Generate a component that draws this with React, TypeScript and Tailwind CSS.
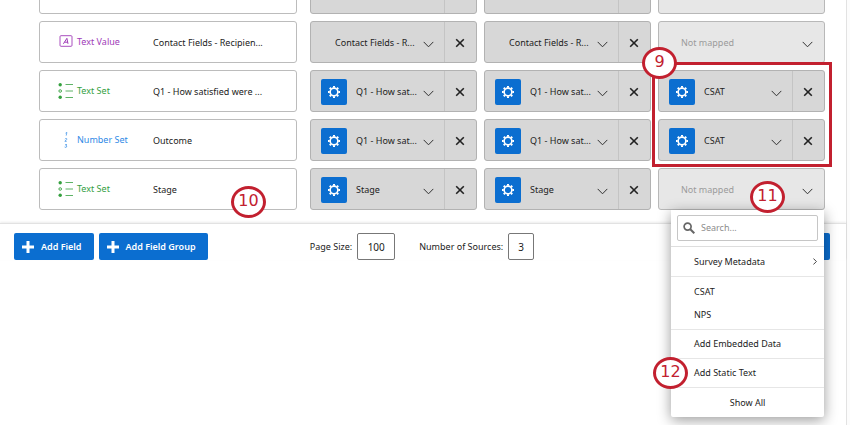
import React from 'react';

type FieldType = 'textValue' | 'textSet' | 'numberSet';

interface Mapping {
    label: string;
    gear?: boolean;
}

interface FieldRow {
    id: string;
    type?: FieldType;
    name: string;
    sources: (Mapping | null)[];
}

const rows: FieldRow[] = [
    { id: 'previous', name: '', sources: [{ label: '' }, { label: '' }, null] },
    {
        id: 'recipient',
        type: 'textValue',
        name: 'Contact Fields - Recipien...',
        sources: [{ label: 'Contact Fields - R...' }, { label: 'Contact Fields - R...' }, null],
    },
    {
        id: 'satisfied',
        type: 'textSet',
        name: 'Q1 - How satisfied were ...',
        sources: [
            { label: 'Q1 - How sat...', gear: true },
            { label: 'Q1 - How sat...', gear: true },
            { label: 'CSAT', gear: true },
        ],
    },
    {
        id: 'outcome',
        type: 'numberSet',
        name: 'Outcome',
        sources: [
            { label: 'Q1 - How sat...', gear: true },
            { label: 'Q1 - How sat...', gear: true },
            { label: 'CSAT', gear: true },
        ],
    },
    {
        id: 'stage',
        type: 'textSet',
        name: 'Stage',
        sources: [{ label: 'Stage', gear: true }, { label: 'Stage', gear: true }, null],
    },
];

const typeStyles: Record<FieldType, { label: string; color: string }> = {
    textValue: { label: 'Text Value', color: 'text-[#a03cb8]' },
    textSet: { label: 'Text Set', color: 'text-[#35a03f]' },
    numberSet: { label: 'Number Set', color: 'text-[#2f8ae6]' },
};

const TypeIcon = ({ type }: { type: FieldType }) => {
    if (type === 'textValue') {
        return (
            <svg viewBox="0 0 16 16" className="h-4 w-4" fill="none" stroke="currentColor" aria-hidden="true">
                <rect x="2" y="1.7" width="12" height="10.6" rx="1" strokeWidth="0.9" />
                <path d="M5.4 9.8 8.9 4.300l1.100 5.500M6.500 8.200h3.200" strokeWidth="1" />
            </svg>
        );
    }
    if (type === 'textSet') {
        return (
            <svg viewBox="0 0 16 16" className="h-4 w-4" fill="none" stroke="currentColor" aria-hidden="true">
                <circle cx="2.2" cy="1.7" r="1.7" fill="currentColor" stroke="none" />
                <circle cx="2.2" cy="8" r="1.3" strokeWidth="0.9" />
                <circle cx="2.2" cy="14.2" r="1.7" fill="currentColor" stroke="none" />
                <path d="M7.5 1.5H15M7.5 8H15M7.5 14.5H15" strokeWidth="0.8" />
            </svg>
        );
    }
    return (
        <svg viewBox="0 0 16 16" className="h-4 w-4" fill="none" stroke="currentColor" strokeWidth="0.7" aria-hidden="true">
            <path d="M7.5 1.2 8.9.4 8.2 3.6" />
            <path d="M7 7.2c.4-1.1 2.2-1 1.8.1C8.6 8 7.5 8.6 6.8 9.3h1.9" />
            <path d="M7 12.7h2l-1.2 1.1c1.3.1 1 1.7-.2 1.7-.5 0-.8-.2-1-.5" />
        </svg>
    );
};

const ChevronDown = ({ className }: { className?: string }) => (
    <svg viewBox="0 0 11 7" className={`h-[7px] w-[11px] ${className ?? ''}`} fill="none" stroke="#333" strokeWidth="1" aria-hidden="true">
        <path d="M.7.9 5.5 5.8 10.3.9" />
    </svg>
);

const GearIcon = () => (
    <svg viewBox="0 0 24 24" className="h-3 w-3" fill="none" stroke="#fff" aria-hidden="true">
        <circle cx="12" cy="12" r="7.7" strokeWidth="3.2" />
        <path
            d="M12 3.500V0M12 20.500V24M3.500 12H0M20.500 12H24M6 6 3.500 3.500M18 18l2.500 2.500M18 6l2.500-2.500M6 18l-2.500 2.500"
            strokeWidth="4"
        />
    </svg>
);

const PlusIcon = () => (
    <svg viewBox="0 0 12 12" className="h-3 w-3" stroke="#fff" strokeWidth="3" aria-hidden="true">
        <path d="M6 0v12M0 6h12" />
    </svg>
);

const Callout = ({ value, className }: { value: number; className: string }) => (
    <span
        className={`absolute z-30 flex h-8 w-[35px] items-center justify-center rounded-[50%] border-[3px] border-[#c2202f] bg-white pb-0.5 font-['DejaVu_Sans',sans-serif] text-[16px] leading-none text-[#c2202f] ${className}`}
    >
        {value}
    </span>
);

const FieldCard = ({ row }: { row: FieldRow }) => (
    <div className="relative mr-1.5 flex h-[42px] items-center rounded-[3px] border border-[#bcbcbc] bg-white">
        {row.type && (
            <div className={`flex w-[113px] items-center gap-[3px] pl-[18px] ${typeStyles[row.type].color}`}>
                <TypeIcon type={row.type} />
                <span>{typeStyles[row.type].label}</span>
            </div>
        )}
        <span className="min-w-0 flex-1 truncate pt-0.5">{row.name}</span>
        {row.id === 'stage' && <Callout value={10} className="top-[17px] right-[30px]" />}
    </div>
);

const MappedCell = ({ mapping, label }: { mapping: Mapping; label: string }) => (
    <div className="flex h-[42px] rounded-[3px] border border-[#b2b2b2] bg-[#d7d7d7]">
        <div className={`flex min-w-0 flex-1 items-center pt-0.5 ${mapping.gear ? 'pl-2.5' : 'pl-6'}`}>
            {mapping.gear && (
                <button
                    type="button"
                    aria-label="Mapping settings"
                    className="mr-[9px] flex h-[26px] w-[26px] shrink-0 items-center justify-center rounded-xs bg-[#0b6ed0]"
                >
                    <GearIcon />
                </button>
            )}
            <div className="relative flex h-full min-w-0 flex-1 items-center">
                <select aria-label={label} className="h-full w-full appearance-none bg-transparent pr-3">
                    <option>{mapping.label}</option>
                </select>
                <ChevronDown className="pointer-events-none absolute top-[17px] right-[10px]" />
            </div>
        </div>
        <button
            type="button"
            aria-label="Remove mapping"
            className="flex w-8 shrink-0 items-center justify-center border-l border-[#c4c4c4] pt-0.5 pr-0.5"
        >
            <svg viewBox="0 0 10 10" className="h-2.5 w-2.5" stroke="#222" strokeWidth="1.6" aria-hidden="true">
                <path d="m1.2 1.2 7.6 7.6M8.8 1.2 1.2 8.8" />
            </svg>
        </button>
    </div>
);

const itemClass = 'flex w-full items-center px-[23px] text-left';

const SourceMenu = () => (
    <div className="absolute top-full right-px left-[13px] z-20 rounded-b-xs bg-white shadow-[0_3px_14px_rgba(0,0,0,0.4)]">
        <div className="h-[37px] border-b border-[#dedede] px-1.5 pt-[5px]">
            <div className="flex h-[26px] items-center gap-1.5 rounded-xs border border-[#c6c6c6] pl-[5px]">
                <svg viewBox="0 0 12 12" className="h-3 w-3 shrink-0" fill="none" stroke="#666" aria-hidden="true">
                    <circle cx="4.6" cy="4.6" r="3.5" strokeWidth="1.7" />
                    <path d="m7.3 7.3 4 4" strokeWidth="2" />
                </svg>
                <input
                    type="search"
                    aria-label="Search sources"
                    placeholder="Search..."
                    className="w-full min-w-0 bg-transparent outline-none placeholder:text-[#8c8c8c]"
                />
            </div>
        </div>
        <button type="button" className={`${itemClass} h-[30px] justify-between border-b border-[#e6e6e6] pr-[7px]!`}>
            Survey Metadata
            <svg viewBox="0 0 4 7" className="h-[7px] w-1" fill="none" stroke="#444" strokeWidth="1" aria-hidden="true">
                <path d="m.4.5 3 3-3 3" />
            </svg>
        </button>
        <div className="border-b border-[#e6e6e6] py-[3px]">
            <button type="button" className={`${itemClass} h-[23px]`}>CSAT</button>
            <button type="button" className={`${itemClass} h-[23px]`}>NPS</button>
        </div>
        <button type="button" className={`${itemClass} h-[29px] border-b border-[#e6e6e6]`}>Add Embedded Data</button>
        <div className="relative">
            <button type="button" className={`${itemClass} h-[29px] border-b border-[#e6e6e6]`}>Add Static Text</button>
            <Callout value={12} className="top-[-2px] left-[-18px]" />
        </div>
        <button type="button" className={`${itemClass} h-[29px] justify-center`}>Show All</button>
    </div>
);

const UnmappedCell = ({ label, open }: { label: string; open?: boolean }) => {
    const boxClass = 'h-[42px] w-full rounded-[3px] border border-[#b8b8b8] bg-[#e7e7e7] pt-0.5 pl-[22px] text-left text-[#9b9b9b]';
    return (
        <div className="relative">
            {open ? (
                <button type="button" aria-haspopup="menu" aria-expanded="true" className={boxClass}>Not mapped</button>
            ) : (
                <select aria-label={label} className={`${boxClass} appearance-none`}>
                    <option>Not mapped</option>
                </select>
            )}
            <ChevronDown className="pointer-events-none absolute top-5 right-3" />
            {open && <Callout value={11} className="top-[13px] right-[40px]" />}
            {open && <SourceMenu />}
        </div>
    );
};

const primaryButton = 'flex h-[27px] items-center gap-[7px] rounded-xs bg-[#0b6ed0] pr-3 pl-2 font-semibold text-white';

const App: React.FC = () => {
    return (
        <div className="min-h-screen overflow-hidden bg-[#fcfcfc] pr-[3px] font-['Noto_Sans',sans-serif] text-[9px] leading-4 text-[#222]">
            <div className="flex min-h-screen flex-col border-r border-[#e2e2e2] bg-white">
                <main className="-mt-7 flex flex-col gap-[7px] pr-[21px] pb-[13px] pl-[39px]">
                    {rows.map((row) => (
                        <div key={row.id} className="grid grid-cols-[264fr_167fr_167fr_167fr] gap-[7px]">
                            <FieldCard row={row} />
                            {row.sources.map((mapping, i) => {
                                const label = `Source ${i + 1} for ${row.name}`;
                                return (
                                    <div key={i} className="relative min-w-0">
                                        {mapping ? (
                                            <MappedCell mapping={mapping} label={label} />
                                        ) : (
                                            <UnmappedCell label={label} open={row.id === 'stage'} />
                                        )}
                                        {row.id === 'satisfied' && i === 2 && (
                                            <>
                                                <div className="pointer-events-none absolute -top-2 -right-[7px] -left-1.5 z-10 h-[105px] border-[3px] border-[#c2202f]" />
                                                <Callout value={9} className="-top-[23px] -left-4" />
                                            </>
                                        )}
                                    </div>
                                );
                            })}
                        </div>
                    ))}
                </main>

                <footer className="grid grid-cols-[1fr_auto_1fr] items-center border-t border-[#e2e2e2] pt-[9px] pr-4 pl-3.5 shadow-[0_-1px_2px_rgba(0,0,0,0.08)]">
                    <div className="flex gap-[5px]">
                        <button type="button" className={primaryButton}>
                            <PlusIcon />
                            Add Field
                        </button>
                        <button type="button" className={primaryButton}>
                            <PlusIcon />
                            Add Field Group
                        </button>
                    </div>
                    <div className="flex items-center">
                        <label htmlFor="page-size" className="mr-[5px]">Page Size:</label>
                        <input
                            id="page-size"
                            defaultValue="100"
                            className="mr-6 h-[27px] w-[38px] rounded-xs border border-[#777] text-center text-[10px]"
                        />
                        <label htmlFor="source-count" className="mr-[5px]">Number of Sources:</label>
                        <input
                            id="source-count"
                            defaultValue="3"
                            className="h-[27px] w-[26px] rounded-xs border border-[#777] text-center text-[10px]"
                        />
                    </div>
                    <button type="button" aria-label="Save" className={`${primaryButton} w-14 justify-self-end`} />
                </footer>
            </div>
        </div>
    );
};

export default App;
